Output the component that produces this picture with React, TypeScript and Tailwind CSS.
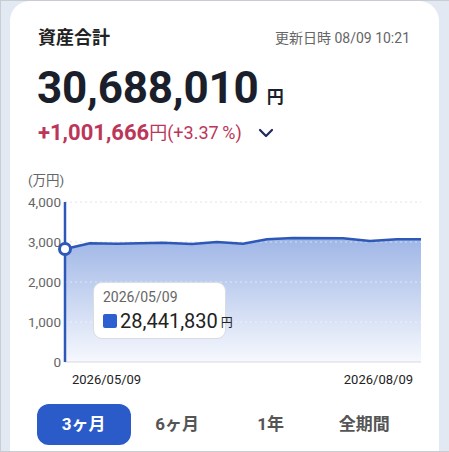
import React from 'react';

// chart points in page coordinates (x, y)
const points: Array<[number, number]> = [
  [65, 249], [90, 243.3], [117, 243.7], [163, 242.7], [192, 244], [217, 242],
  [243, 243.7], [267, 239.3], [293, 238], [343, 238.3], [370, 241], [397, 239.3], [421, 239.3],
];

const OX = 10;
const OY = 168;

function Chart() {
  const pts = points.map(([x, y]) => [x - OX, y - OY]);
  const line = pts.map(([x, y], i) => `${i === 0 ? 'M' : 'L'}${x} ${y}`).join(' ');
  const area = `${line} L${421 - OX} ${362 - OY} L${65 - OX} ${362 - OY} Z`;
  const grid = [
    { label: '4,000', y: 202 },
    { label: '3,000', y: 242 },
    { label: '2,000', y: 282 },
    { label: '1,000', y: 322 },
  ];

  return (
    <svg width={429} height={222} className="block" style={{ fontFamily: 'Roboto, "Noto Sans CJK JP", sans-serif' }}>
      <defs>
        <linearGradient id="fill" x1="0" y1="0" x2="0" y2="1">
          <stop offset="0%" stopColor="#9fb6e6" />
          <stop offset="100%" stopColor="#f6f8fd" />
        </linearGradient>
      </defs>
      <text x={18} y={185 - OY} fontSize={13.5} fill="#666">(万円)</text>
      {grid.map((g) => (
        <g key={g.label}>
          <line x1={65 - OX} x2={421 - OX} y1={g.y - OY} y2={g.y - OY} stroke="#d6d9df" strokeDasharray="2 3" />
          <text x={61 - OX} y={g.y - OY + 5} fontSize={13.5} fill="#666" textAnchor="end">{g.label}</text>
        </g>
      ))}
      <path d={area} fill="url(#fill)" />
      {grid.map((g) => (
        <line key={g.label + 'o'} x1={65 - OX} x2={421 - OX} y1={g.y - OY} y2={g.y - OY} stroke="#ffffff" strokeOpacity={0.5} strokeDasharray="2 3" />
      ))}
      <line x1={65 - OX} x2={421 - OX} y1={362 - OY} y2={362 - OY} stroke="#d6d9df" />
      <text x={61 - OX} y={367 - OY} fontSize={13.5} fill="#666" textAnchor="end">0</text>
      <path d={line} fill="none" stroke="#2d58b8" strokeWidth={2.5} strokeLinejoin="round" />
      <line x1={65 - OX} x2={65 - OX} y1={202 - OY} y2={362 - OY} stroke="#2d58b8" strokeWidth={2.5} />
      <circle cx={65 - OX} cy={249 - OY} r={5.5} fill="#fff" stroke="#2d58b8" strokeWidth={3} />
      <text x={72 - OX} y={384 - OY} fontSize={13} fill="#222">2026/05/09</text>
      <text x={413 - OX} y={384 - OY} fontSize={13} fill="#222" textAnchor="end">2026/08/09</text>
    </svg>
  );
}

export default function App() {
  const tabs = ['3ヶ月', '6ヶ月', '1年', '全期間'];

  return (
    <div
      className="h-[452px] w-full overflow-hidden bg-[#e3e9f3] border-t border-l border-b border-[#c9ccd2]"
      style={{ fontFamily: 'Roboto, "Noto Sans CJK JP", sans-serif' }}
    >
      <div className="ml-[9px] mr-[10px] h-[470px] rounded-t-[20px] bg-white">
        {/* header */}
        <div className="flex items-center justify-between pl-[28px] pr-[29px] pt-[26px]">
          <h1 className="text-[18px] font-bold leading-[22px] text-[#222]">資産合計</h1>
          <span className="text-[14px] leading-[22px] text-[#666]">更新日時 08/09 10:21</span>
        </div>

        <div className="mt-[14px] flex items-baseline pl-[27px]">
          <span className="text-[44px] font-bold leading-[50px] tracking-[-0.2px] text-[#1a1f2b]">30,688,010</span>
          <span className="ml-[8px] text-[17px] font-bold text-[#1a1f2b]">円</span>
        </div>

        <div className="mt-[6px] flex items-center pl-[28px]">
          <span className="text-[22px] font-bold leading-[28px] text-[#bb3659]">+1,001,666</span>
          <span className="text-[18px] leading-[28px] text-[#bb3659]">円(+3.37&thinsp;%)</span>
          <svg width="16" height="10" viewBox="0 0 16 10" className="ml-[16px]">
            <path d="M2 2 L8 8 L14 2" fill="none" stroke="#1e2a5a" strokeWidth="2.2" strokeLinecap="round" strokeLinejoin="round" />
          </svg>
        </div>

        {/* chart */}
        <div className="relative mt-[21px]">
          <Chart />
          <div className="absolute left-[83px] top-[114px] w-[133px] rounded-[9px] border border-[#d9dce2] bg-white px-[9px] pt-[5px] pb-[5px]">
            <div className="text-[14px] leading-[19px] text-[#666]">2026/05/09</div>
            <div className="mt-[2px] flex items-center">
              <div className="mr-[3px] h-[14px] w-[14px] shrink-0 rounded-[2px] bg-[#2d5fd0]" />
              <span className="text-[20px] leading-[24px] text-[#222]">28,441,830</span>
              <span className="ml-[3px] mt-[3px] text-[12px] text-[#222]">円</span>
            </div>
          </div>
        </div>

        {/* period tabs */}
        <div className="mt-[14px] grid grid-cols-4 pl-[27px] pr-[28px]">
          {tabs.map((t, i) => (
            <button
              key={t}
              className={`h-[41px] rounded-[12px] text-[17px] font-bold ${
                i === 0 ? 'bg-[#2a5bc9] text-white' : 'text-[#555]'
              }`}
            >
              {t}
            </button>
          ))}
        </div>
      </div>
    </div>
  );
}
